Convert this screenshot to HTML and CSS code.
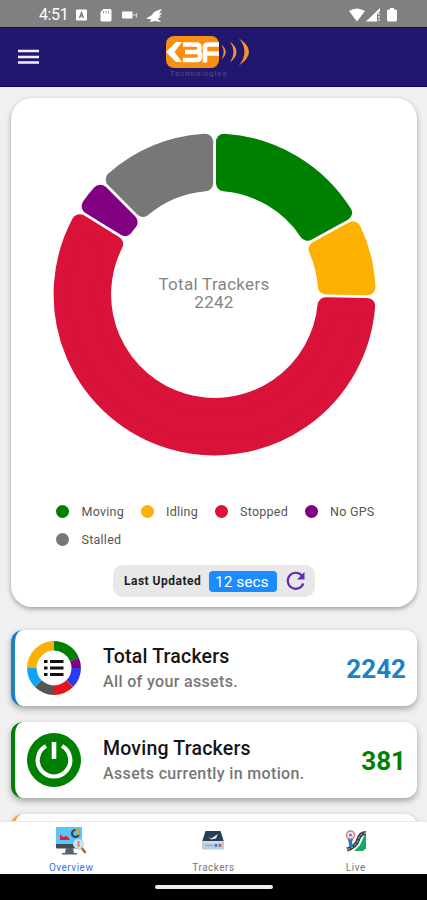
FILE: index.html
```html
<!DOCTYPE html>
<html lang="en">
<head>
<meta charset="utf-8">
<title>KBF Technologies</title>
<link rel="stylesheet" href="styles.css">
</head>
<body>
<div class="phone">
  <div class="status">
    <span class="clock">4:51</span>
    <svg class="status-left" width="90" height="16" viewBox="0 0 90 16">
      <rect x="0" y="2.5" width="11" height="11" rx="1" fill="#fff"/>
      <path d="M3.500 11 5.500 5.500 7.500 11M4 9h3" fill="none" stroke="#808080" stroke-width="1.400"/>
      <path d="M27.500 2H34q1.500 0 1.500 1.500v9.500q0 1.500-1.500 1.500h-8q-1.500 0-1.500-1.500V5z" fill="#fff"/>
      <path d="M27.500 4v2.500M30 4v2.500M32.500 4v2.500" stroke="#999" stroke-width="1"/>
      <rect x="46" y="4.500" width="10.500" height="7" rx="1" fill="#fff"/>
      <path d="M57 8h2.500M60.500 6v4.500" stroke="#ccc" stroke-width="1.300"/>
      <path d="M70 11.500 76 8q1-4 10-6l-3 4.500 3-.5-3 3.500h2.500l-4 2.500 4 3-6-1-6 1 2-2.500z" fill="#fff"/>
    </svg>
    <svg class="status-right" width="50" height="16" viewBox="0 0 50 16">
      <path d="M0 4Q8-1 16 4L8 14.500z" fill="#fff"/>
      <path d="M17 14.500 31 1v3l-3 3v7.500z" fill="#fff"/>
      <path d="M30 6v9" stroke="#ddd" stroke-width="1.600" stroke-dasharray="2 1"/>
      <path d="M41 1h4v1.500h1.500q1.500 0 1.500 1.500v9q0 1.500-1.500 1.500h-7Q38 14.500 38 13V4q0-1.500 1.500-1.500H41z" fill="#fff"/>
    </svg>
  </div>
  <header class="topbar">
    <svg class="menu" width="21" height="16" viewBox="0 0 21 16"><path d="M0 2h21M0 8h21M0 13.500h21" stroke="#f1effa" stroke-width="2.500"/></svg>
    <div class="brand">
      <svg width="88" height="34" viewBox="0 0 88 34">
        <rect x="1" y="1" width="53" height="32" rx="8" fill="#f78f12"/>
        <path d="M1 17 11 7h6L9.500 17 17 27h-6z" fill="#fff"/>
        <g fill="none" stroke="#fff" stroke-width="4.600">
          <path d="M18 9.500h13q3.500 0 3.500 3v1q0 3.500-3.500 3.500H20M31 17q4 0 4 3v1.500q0 3.500-3.500 3.500H18"/>
          <path d="M54 9.500H43q-3 0-3 3V27.500M40 18.500h14"/>
        </g>
        <g fill="#f3942c">
          <path d="M57 10.500q7 6.500 0 13 4-6.500 0-13z" stroke="#f3942c" stroke-width=".6"/>
          <path d="M65 6.500q13 10.500 0 21 7-10.500 0-21z"/>
          <path d="M74 3.500q20 13 0 27 11-14 0-27z"/>
        </g>
      </svg>
      <div class="brand-sub">Technologies</div>
    </div>
  </header>
  <main class="content">
    <section class="chart-card">
      <div class="donut">
        <svg id="ring" width="324" height="324" viewBox="-162.6 -162.4 324 324"></svg>
        <div class="donut-label"><div>Total Trackers</div><div>2242</div></div>
      </div>
      <div class="legend">
        <span class="key"><i class="dot moving"></i>Moving</span>
        <span class="key"><i class="dot idling"></i>Idling</span>
        <span class="key"><i class="dot stopped"></i>Stopped</span>
        <span class="key"><i class="dot nogps"></i>No GPS</span>
        <span class="key"><i class="dot stalled"></i>Stalled</span>
      </div>
      <div class="updated">
        <span class="updated-label">Last Updated</span>
        <span class="updated-time">12 secs</span>
        <svg width="20" height="20" viewBox="0 0 20 20"><path d="M17.300 12.500A8 8 0 1 1 16 4.700" fill="none" stroke="#5c2bb8" stroke-width="2.200"/><path d="M18.500 1v7.500H11z" fill="#5c2bb8"/></svg>
      </div>
    </section>
    <section class="item blue">
      <svg class="item-icon" width="54" height="54" viewBox="-27 -27 54 54">
        <g fill="none" stroke-width="9.500">
          <path d="M0-22.200A22.200 22.200 0 0 1 20.500-8.500" stroke="#008000"/>
          <path d="M20.500-8.500A22.200 22.200 0 0 1 22.200 0" stroke="#800080"/>
          <path d="M22.200 0A22.200 22.200 0 0 1 15.700 15.700" stroke="#2b3af0"/>
          <path d="M15.700 15.700A22.200 22.200 0 0 1 0 22.200" stroke="#e2161c"/>
          <path d="M0 22.200A22.200 22.200 0 0 1-15.700 15.700" stroke="#555"/>
          <path d="M-15.700 15.700A22.200 22.200 0 0 1-22.200 0" stroke="#12a4f4"/>
          <path d="M-22.200 0A22.200 22.200 0 0 1 0-22.200" stroke="#fbb004"/>
        </g>
        <path d="M-4-6.500H9.500M-4 0H9.500M-4 6.500H9.500M-10-6.500h3.500M-10 0h3.500M-10 6.500h3.500" stroke="#111" stroke-width="2.800"/>
      </svg>
      <div class="item-text"><h2>Total Trackers</h2><p>All of your assets.</p></div>
      <strong>2242</strong>
    </section>
    <section class="item green">
      <svg class="item-icon" width="54" height="54" viewBox="-27 -27 54 54">
        <circle r="27" fill="#008000"/>
        <path d="M-8-14A16.300 16.300 0 1 0 8-14" fill="none" stroke="#fff" stroke-width="4.200"/>
        <path d="M0-18V-1" stroke="#fff" stroke-width="4.600"/>
      </svg>
      <div class="item-text"><h2>Moving Trackers</h2><p>Assets currently in motion.</p></div>
      <strong>381</strong>
    </section>
    <section class="item amber"></section>
  </main>
  <nav class="tabs">
    <a class="tab active">
      <svg width="32" height="28" viewBox="0 0 32 28">
        <rect x="1" y="0" width="26" height="18" rx="1" fill="#58c6f8"/>
        <path d="M1 17h26v3.500q0 1-1 1H2q-1 0-1-1z" fill="#454b53"/>
        <path d="M11 21h7l1 5h3v1.500H7V26h3z" fill="#5c6269"/>
        <path d="M5 13V7l3 3 4-1 3 4z" fill="#e21e35"/>
        <circle cx="20.500" cy="6.500" r="3.500" fill="none" stroke="#32445b" stroke-width="2.200"/>
        <path d="M20.500 3a3.500 3.500 0 0 1 3 5" fill="none" stroke="#f5b51b" stroke-width="2.200"/>
        <path d="m26 20 4.500 6" stroke="#b8532d" stroke-width="2.200"/>
        <circle cx="23.500" cy="17" r="5" fill="#c7e7f2" stroke="#b6d5e3"/>
        <path d="M23.500 14v6" stroke="#dd8a94" stroke-width="2.500"/>
      </svg>
      <span>Overview</span>
    </a>
    <a class="tab">
      <svg width="32" height="28" viewBox="0 0 32 28">
        <path d="M8.500 4h15l3.500 11H5z" fill="#263e50"/>
        <path d="M5 14h22v7q0 1.500-1.500 1.500h-19Q5 22.500 5 21z" fill="#b9cfdf"/>
        <path d="M6 15h20" stroke="#dceaf4" stroke-width="1"/>
        <path d="M8 18.500h8" stroke="#8facbf" stroke-width="1.200"/>
        <path d="m11 10 3 1.500L21 7l-2 4.500-5 1z" fill="#dae5ec"/>
        <circle cx="19" cy="18.500" r="1.400" fill="#1781c6"/><circle cx="23" cy="18.500" r="1.400" fill="#e7472c"/>
      </svg>
      <span>Trackers</span>
    </a>
    <a class="tab">
      <svg width="32" height="28" viewBox="0 0 32 28">
        <path d="M26 5v16.500l-3 2.500H14l6-6z" fill="#12ad64"/>
        <path d="M26 6q-6 0-8 7t-11 9.500" fill="none" stroke="#3d4447" stroke-width="4"/>
        <path d="M26 6q-6 0-8 7t-11 9.500" fill="none" stroke="#fff" stroke-width=".8" stroke-dasharray="2 2"/>
        <path d="M7.500 11h6l-1.500 4 1 5H9.500L8.500 15z" fill="#237ebd"/>
        <circle cx="10.500" cy="8" r="4" fill="#f4e4e8" stroke="#d77b86" stroke-width="1.500"/>
        <circle cx="10.500" cy="8" r="1.600" fill="#6785b8"/>
      </svg>
      <span>Live</span>
    </a>
  </nav>
  <div class="gesture"><i></i></div>
</div>
<script src="chart.js"></script>
</body>
</html>
```
FILE: styles.css
```css
* { box-sizing: border-box; }
body { margin: 0; font-family: Roboto, "Liberation Sans", sans-serif; background: #f0f0f0; }
svg { display: block; flex: none; }
.phone { width: 427px; height: 900px; display: flex; flex-direction: column; overflow: hidden; }
.status { flex: none; height: 27px; background: #808080; display: flex; align-items: center; padding: 2px 28px 0 39px; color: #fff; }
.clock { width: 37px; font-size: 16px; line-height: 20px; letter-spacing: -.4px; }
.status-right { margin-left: auto; }
.topbar { flex: none; height: 60px; background: #22176f; border-top: 1px solid #120567; border-bottom: 1px solid #120567; display: flex; align-items: flex-start; padding: 7px 0 0 18px; }
.menu { margin-top: 14px; }
.brand { margin-left: 126px; }
.brand-sub { font-size: 8px; line-height: 9px; color: #554d86; padding-left: 5px; letter-spacing: .8px; }
.content { flex: none; height: 734px; overflow: hidden; background: #f0f0f0; padding: 11px 10px 0 11px; }
.chart-card { height: 509px; border-radius: 21px; background: #fff; box-shadow: 0 2px 5px rgba(0,0,0,.35); padding-top: 34px; display: flex; flex-direction: column; align-items: center; }
.donut { display: grid; place-items: center; }
.donut > * { grid-area: 1 / 1; }
.donut-label { text-align: center; color: #858585; font-size: 17px; line-height: 18px; letter-spacing: .3px; padding-bottom: 3px; }
.legend { width: 100%; margin-top: 47px; padding-left: 45px; display: grid; grid-template-columns: 84.5px 74px 90px 1fr; row-gap: 12px; }
.key { display: flex; align-items: center; height: 16px; font-size: 12.5px; letter-spacing: .25px; color: #555; white-space: nowrap; }
.dot { width: 13px; height: 13px; border-radius: 50%; margin-right: 12.5px; flex: none; }
.moving { background: #008000; }
.idling { background: #ffb000; }
.stopped { background: #dc1238; }
.nogps { background: #800080; }
.stalled { background: #777; }
.updated { margin-top: 18px; width: 202px; height: 32px; border-radius: 10px; background: #e8e8e8; display: flex; align-items: center; padding-left: 11px; }
.updated-label { width: 85px; font-size: 12px; font-weight: 700; letter-spacing: .5px; color: #222; white-space: nowrap; }
.updated-time { width: 68px; height: 21px; border-radius: 4px; background: #1a8cff; color: #fff; font-size: 15.5px; line-height: 22px; padding-left: 6px; margin-right: 9px; white-space: nowrap; }
.item { height: 76px; margin-bottom: 16px; border-left: 4px solid; border-radius: 12px; background: #fff; box-shadow: 0 3px 6px rgba(0,0,0,.32); display: flex; align-items: center; padding: 0 11px 0 12px; }
.chart-card + .item { margin-top: 23px; }
.item-text { margin-left: 22px; flex: 1; padding-top: 2px; white-space: nowrap; }
.item h2 { margin: 0; font-size: 19.5px; line-height: 25px; font-weight: 500; letter-spacing: .2px; color: #151515; }
.item p { margin: 0; font-size: 16px; line-height: 25px; font-weight: 500; color: #777; letter-spacing: .35px; }
.item strong { font-size: 26px; font-weight: 700; padding-top: 2px; }
.blue { border-color: #1b82c4; }
.blue strong { color: #1b82c4; }
.green { border-color: #008000; }
.green strong { color: #008000; }
.amber { border-color: #f5a623; }
.tabs { flex: none; height: 53px; background: #fff; border-top: 1px solid #e8e8e8; display: grid; grid-template-columns: repeat(3, 1fr); }
.tab { display: flex; flex-direction: column; align-items: center; padding-top: 5px; font-size: 10px; color: #777; letter-spacing: .5px; }
.tab span { line-height: 12px; margin-top: 7px; }
.active { color: #3b70f0; }
.gesture { flex: 1; background: #000; display: flex; justify-content: center; padding-top: 11px; }
.gesture i { width: 118px; height: 4px; border-radius: 2px; background: #eee; }
```
FILE: chart.js
```js
// Each slice is inset by its corner radius and stroked with round joins.
const slices = [
  [0, 61.3, "#008000"],
  [61.3, 90.8, "#fcb103"],
  [90.8, 301.7, "#d81238"],
  [301.7, 315.2, "#800080"],
  [315.2, 360, "#777777"]
];
const outer = 161, inner = 103.5, corner = 8, gap = 1.4;
const point = (r, a) => (r * Math.sin(a)).toFixed(2) + " " + (-r * Math.cos(a)).toFixed(2);
document.getElementById("ring").innerHTML = slices.map(([from, to, color]) => {
  const R = outer - corner, r = inner + corner;
  const a = from * Math.PI / 180, b = to * Math.PI / 180;
  const dR = Math.asin((corner + gap) / R), dr = Math.asin((corner + gap) / r);
  const big = to - from > 180 ? 1 : 0;
  return `<path d="M${point(R, a + dR)}A${R} ${R} 0 ${big} 1 ${point(R, b - dR)}L${point(r, b - dr)}A${r} ${r} 0 ${big} 0 ${point(r, a + dr)}Z" fill="${color}" stroke="${color}" stroke-width="${corner * 2}" stroke-linejoin="round"/>`;
}).join("");
```
